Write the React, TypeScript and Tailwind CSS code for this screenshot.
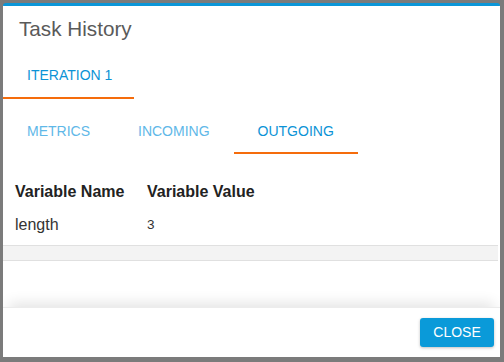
import { useState } from "react";

const subTabs = ["METRICS", "INCOMING", "OUTGOING"];

const rows = [{ name: "length", value: "3" }];

export default function App() {
  const [active, setActive] = useState("OUTGOING");

  return (
    <div
      className="w-[504px] h-[362px] bg-[#7b7b7b] pt-[3px] pl-[3px] pr-[4px] pb-[5px]"
      style={{ fontFamily: '"Liberation Sans", Arial, sans-serif' }}
    >
      <div className="h-full flex flex-col bg-white rounded-t-[3px] border-t-[3px] border-[#0a96d8] overflow-hidden">
        <div className="h-[44px] flex items-center pl-4 pt-[3px]">
          <h3 className="text-[20.7px] text-[#5a5a5a] leading-none">Task History</h3>
        </div>

        <div className="flex">
          <button className="h-[49px] pt-[2px] pl-6 pr-[22px] text-[14px] text-[#0b93d6] border-b-2 border-[#f56c0c] leading-none">
            ITERATION 1
          </button>
        </div>

        <div className="flex mt-[6px]">
          {subTabs.map((t) => (
            <button
              key={t}
              onClick={() => setActive(t)}
              className={
                t === active
                  ? "h-[49px] pt-[5px] px-6 text-[14px] leading-none text-[#0b93d6] border-b-2 border-[#f56c0c]"
                  : "h-[49px] pt-[5px] px-6 text-[14px] leading-none text-[#5fb8e8] border-b-2 border-transparent"
              }
            >
              {t}
            </button>
          ))}
        </div>

        <div className="flex-1 flex flex-col">
          <table className="mt-[26px] text-left">
            <thead>
              <tr>
                <th className="pl-3 w-[144px] h-[24px] text-[16px] font-bold text-[#222]">Variable Name</th>
                <th className="h-[24px] text-[16px] font-bold text-[#222]">Variable Value</th>
              </tr>
            </thead>
            <tbody>
              {rows.map((r) => (
                <tr key={r.name}>
                  <td className="pl-3 pt-[9px] h-[33px] text-[16px] text-[#333]">{r.name}</td>
                  <td className="pt-[9px] h-[33px] text-[13.5px] text-[#333]">{r.value}</td>
                </tr>
              ))}
            </tbody>
          </table>
          <div className="mt-[8px] mr-[2px] h-[16px] bg-[#f3f3f3] border-y border-[#e0e0e0]" />
          <div className="flex-1" />
        </div>

        <div className="h-[50px] flex items-center justify-end pr-[6px] border-t border-[#ececec] shadow-[0_-10px_14px_-6px_rgba(0,0,0,0.11)]">
          <button className="w-[74px] h-[29px] rounded-[3px] bg-[#0a9ad9] text-white text-[14px] shadow-[0_1px_3px_rgba(0,0,0,0.25)]">
            CLOSE
          </button>
        </div>
      </div>
    </div>
  );
}
